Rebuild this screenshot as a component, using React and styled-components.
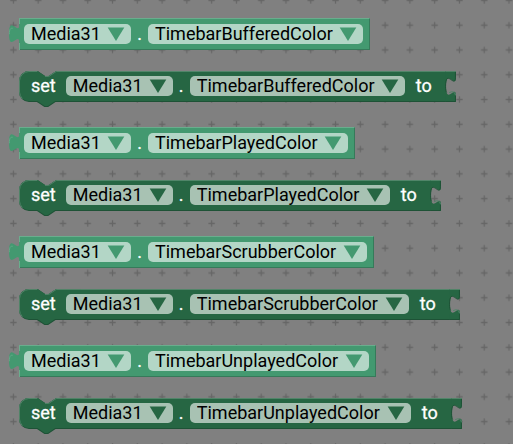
import React from "react";
import styled, { createGlobalStyle } from "styled-components";

const GlobalStyle = createGlobalStyle`
  * { box-sizing: border-box; }
  body { margin: 0; background: #808080; }
`;

const getter = { fill: "#439970", light: "#69ad8d", dark: "#367a5a" };
const setter = { fill: "#266643", light: "#518569", dark: "#1e5236" };

const Workspace = styled.main`
  position: relative;
  min-height: 100vh;
  overflow: hidden;
  padding: 18px 19px 0;
  background: #808080;
  font-family: Roboto, "Liberation Sans", sans-serif;
  font-size: 18px;
  line-height: 20px;
`;

const Grid = styled.svg`
  position: absolute;
  inset: 0;
  width: 100%;
  height: 100%;
`;

const BlockList = styled.div`
  position: relative;
  display: flex;
  flex-direction: column;
  align-items: flex-start;
`;

const Pair = styled.section`
  display: flex;
  flex-direction: column;
  align-items: flex-start;
  gap: 21px;
  height: 109px;
`;

const Block = styled.div`
  position: relative;
  height: ${(p) => (p.$setter ? 31 : 32)}px;
`;

const Shape = styled.div`
  position: absolute;
  inset: 0;
  display: flex;
`;

const Body = styled.div`
  flex: 1;
  background: ${(p) => p.$tone.fill};
  border-top: 1px solid ${(p) => p.$tone.light};
  border-bottom: 1px solid ${(p) => p.$tone.dark};
  border-right: ${(p) => (p.$closed ? `1px solid ${p.$tone.dark}` : "0")};
`;

const Edge = styled.svg`
  flex: none;
  overflow: visible;
`;

const Content = styled.div`
  position: relative;
  display: flex;
  padding: ${(p) => (p.$setter ? "5px 24px 0 12px" : "6px 7px 0 5px")};
  color: #fff;
`;

const Word = styled.span`
  margin-right: ${(p) => (p.$lead ? 10 : 0)}px;
  margin-left: ${(p) => (p.$lead ? 0 : 11)}px;
  -webkit-text-stroke: 0.3px #fff;
`;

const Dot = styled.span`
  width: 17px;
  text-align: center;
  -webkit-text-stroke: 0.3px #fff;
`;

const Field = styled.label`
  position: relative;
  display: flex;
  height: 20px;
  border-radius: 5px;
  background: rgba(255, 255, 255, 0.6);
`;

const Select = styled.select`
  appearance: none;
  height: 20px;
  margin: 0;
  padding: 0 30px 0 7px;
  border: 0;
  border-radius: 5px;
  background: transparent;
  color: #000;
  font: inherit;
  cursor: pointer;
`;

const Arrow = styled.svg`
  position: absolute;
  top: 3px;
  right: 6px;
  pointer-events: none;
`;

function Dropdown({ label, value, tone }) {
  return (
    <Field>
      <Select aria-label={label} defaultValue={value}>
        <option value={value}>{value}</option>
      </Select>
      <Arrow width="18" height="14" viewBox="0 0 18 14" aria-hidden="true">
        <path d="M.7 .5H17.3L9 14z" fill={tone.fill} />
      </Arrow>
    </Field>
  );
}

function OutputTab() {
  return (
    <Edge width="10" height="32" viewBox="0 0 8 25.6" aria-hidden="true">
      <path d="M8.2 20c0-10-8.2 8-8.2-7.5S8.2 15 8.2 5z" fill={getter.fill} />
      <path d="M.3 13C.2 8.6 1.4 8 3 8.2" fill="none" stroke={getter.light} strokeWidth=".6" />
    </Edge>
  );
}

function StackEdge() {
  return (
    <Edge width="62" height="31" viewBox="0 0 50 25" aria-hidden="true">
      <path
        d="M0 8A8 8 0 0 1 8 0H15l6 4h3l6-4H50V25H29.5l-6 4h-3l-6-4H8a8 8 0 0 1-8-8z"
        fill={setter.dark}
      />
      <path
        d="M0 8A8 8 0 0 1 8 0H15l6 4h3l6-4H50V24.2H29.2l-6 4h-2.4l-6-4H8A8 8 0 0 1 0 17z"
        fill={setter.fill}
      />
      <path
        d="M2.7 22.3A8 8 0 0 1 .4 17V8A7.6 7.6 0 0 1 8 .4H14.8M21 4.4h3l6-4H50"
        fill="none"
        stroke={setter.light}
        strokeWidth=".8"
      />
    </Edge>
  );
}

function InputSocket() {
  return (
    <Edge width="10" height="31" viewBox="0 0 8 25" aria-hidden="true">
      <path d="M-.5 0H8V5C8 15 0-3 0 12.5S8 10 8 20v5H-.5z" fill={setter.fill} />
      <path d="M-.5 .4H8M2.5 17.4Q7 15.4 7.6 19.5" fill="none" stroke={setter.light} strokeWidth=".8" />
      <path
        d="M-.5 24.6H7.6V20M7.6 .8V5C7.6 15-.4-3-.4 12.5c0 2.4.3 4 .9 4.8"
        fill="none"
        stroke={setter.dark}
        strokeWidth=".8"
      />
    </Edge>
  );
}

const TabSlot = styled.div`
  display: flex;
  margin-left: -10px;
`;

const LeftLine = styled.div`
  width: 1px;
  background: linear-gradient(
    ${getter.light} 6px,
    ${getter.fill} 6px 25px,
    ${getter.light} 25px
  );
`;

function GetterBlock({ property }) {
  return (
    <Block>
      <Shape>
        <TabSlot>
          <OutputTab />
        </TabSlot>
        <LeftLine />
        <Body $tone={getter} $closed />
      </Shape>
      <Content>
        <Dropdown label="Component" value="Media31" tone={getter} />
        <Dot>.</Dot>
        <Dropdown label="Property" value={property} tone={getter} />
      </Content>
    </Block>
  );
}

function SetterBlock({ property }) {
  return (
    <Block $setter>
      <Shape>
        <StackEdge />
        <Body $tone={setter} />
        <InputSocket />
      </Shape>
      <Content $setter>
        <Word $lead>set</Word>
        <Dropdown label="Component" value="Media31" tone={setter} />
        <Dot>.</Dot>
        <Dropdown label="Property" value={property} tone={setter} />
        <Word>to</Word>
      </Content>
    </Block>
  );
}

const properties = [
  "TimebarBufferedColor",
  "TimebarPlayedColor",
  "TimebarScrubberColor",
  "TimebarUnplayedColor",
];

export default function App() {
  return (
    <>
      <GlobalStyle />
      <Workspace>
        <Grid aria-hidden="true">
          <defs>
            <pattern id="crosses" x="1" y="12.8" width="24.78" height="24.78" patternUnits="userSpaceOnUse">
              <path d="M9.2 12.4h6.4M12.4 9.2v6.4" stroke="#666" strokeWidth="1.3" />
            </pattern>
          </defs>
          <rect width="100%" height="100%" fill="url(#crosses)" />
        </Grid>
        <BlockList>
          {properties.map((property) => (
            <Pair key={property}>
              <GetterBlock property={property} />
              <SetterBlock property={property} />
            </Pair>
          ))}
        </BlockList>
      </Workspace>
    </>
  );
}
